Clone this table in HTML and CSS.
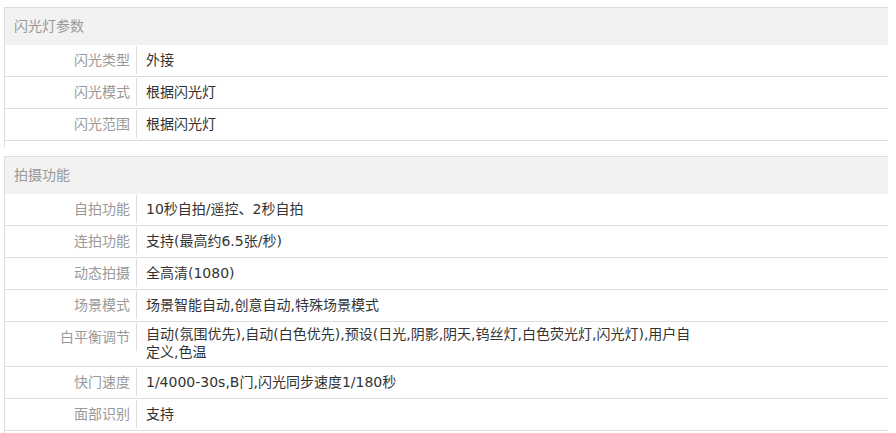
FILE: index.html
```html
<!DOCTYPE html>
<html lang="zh-CN">
<head>
<meta charset="utf-8">
<title>参数</title>
<link rel="stylesheet" href="styles.css">
</head>
<body>
<div class="page">
  <section class="group">
    <h3 class="group-title">闪光灯参数</h3>
    <ul class="params">
      <li class="param"><span class="param-label">闪光类型</span><span class="param-value">外接</span></li>
      <li class="param"><span class="param-label">闪光模式</span><span class="param-value">根据闪光灯</span></li>
      <li class="param"><span class="param-label">闪光范围</span><span class="param-value">根据闪光灯</span></li>
    </ul>
  </section>
  <section class="group">
    <h3 class="group-title">拍摄功能</h3>
    <ul class="params">
      <li class="param"><span class="param-label">自拍功能</span><span class="param-value">10秒自拍/遥控、2秒自拍</span></li>
      <li class="param"><span class="param-label">连拍功能</span><span class="param-value">支持(最高约6.5张/秒)</span></li>
      <li class="param"><span class="param-label">动态拍摄</span><span class="param-value">全高清(1080)</span></li>
      <li class="param"><span class="param-label">场景模式</span><span class="param-value">场景智能自动,创意自动,特殊场景模式</span></li>
      <li class="param"><span class="param-label">白平衡调节</span><span class="param-value">自动(氛围优先),自动(白色优先),预设(日光,阴影,阴天,钨丝灯,白色荧光灯,闪光灯),用户自定义,色温</span></li>
      <li class="param"><span class="param-label">快门速度</span><span class="param-value">1/4000-30s,B门,闪光同步速度1/180秒</span></li>
      <li class="param"><span class="param-label">面部识别</span><span class="param-value">支持</span></li>
    </ul>
  </section>
</div>
</body>
</html>
```
FILE: styles.css
```css
html, body {
  margin: 0;
  padding: 0;
  background: #fff;
}
body {
  font-family: "DejaVu Sans", "Noto Sans CJK SC", sans-serif;
  font-size: 14px;
}
.page {
  padding: 7px 8px 0 4px;
}
.group {
  border-top: 1px solid #ddd;
  border-left: 1px solid #ddd;
  padding-bottom: 6px;
  margin-bottom: 9px;
}
.group-title {
  margin: 0;
  height: 37px;
  line-height: 37px;
  padding-left: 9px;
  background: #f2f2f2;
  font-size: 14px;
  font-weight: normal;
  color: #999;
}
.params {
  list-style: none;
  margin: 0;
  padding: 0;
}
.param {
  display: flex;
  align-items: center;
  min-height: 31px;
  border-bottom: 1px solid #ddd;
}
.param-label {
  flex: none;
  align-self: flex-start;
  width: 125px;
  padding-right: 6px;
  height: 28px;
  line-height: 28px;
  margin-top: 1px;
  text-align: right;
  border-right: 1px solid #ddd;
  color: #999;
}
.param-value {
  width: 550px;
  padding: 3px 0 5px 9px;
  line-height: 18px;
  color: #333;
}
```
